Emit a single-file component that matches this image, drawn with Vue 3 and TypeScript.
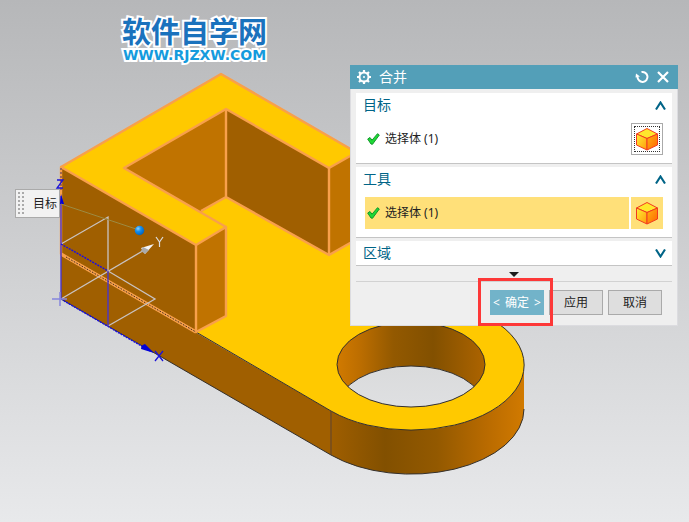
<script setup lang="ts">
import { ref } from 'vue'

interface Section {
  id: string
  title: string
  open: boolean
  active: boolean
}

const sections = ref<Section[]>([
  { id: 'target', title: '目标', open: true, active: false },
  { id: 'tool', title: '工具', open: true, active: true },
  { id: 'region', title: '区域', open: false, active: false },
])

const toggle = (section: Section): void => {
  section.open = !section.open
}
</script>

<template>
  <main class="viewport">
    <svg class="scene" viewBox="0 0 689 522" preserveAspectRatio="xMinYMin meet" aria-hidden="true">
      <defs>
        <linearGradient id="outerWall" gradientUnits="userSpaceOnUse" x1="331" y1="0" x2="524" y2="0">
          <stop offset="0" stop-color="#9f5e00" />
          <stop offset="0.28" stop-color="#825000" />
          <stop offset="0.55" stop-color="#935900" />
          <stop offset="0.8" stop-color="#b86a00" />
          <stop offset="1" stop-color="#d17a00" />
        </linearGradient>
        <linearGradient id="holeWall" gradientUnits="userSpaceOnUse" x1="337" y1="0" x2="485" y2="0">
          <stop offset="0" stop-color="#d17a00" />
          <stop offset="0.15" stop-color="#bd6e00" />
          <stop offset="0.38" stop-color="#935900" />
          <stop offset="0.65" stop-color="#825000" />
          <stop offset="1" stop-color="#ad6400" />
        </linearGradient>
        <linearGradient id="floorTone" gradientUnits="userSpaceOnUse" x1="0" y1="360" x2="0" y2="410">
          <stop offset="0" stop-color="#d9dadb" />
          <stop offset="1" stop-color="#dfe0e2" />
        </linearGradient>
        <radialGradient id="ball" cx="0.35" cy="0.3" r="0.75">
          <stop offset="0" stop-color="#8fd4ff" />
          <stop offset="0.4" stop-color="#1690f0" />
          <stop offset="1" stop-color="#0060b8" />
        </radialGradient>
        <clipPath id="holeClip"><ellipse cx="411" cy="364.5" rx="74" ry="42.5" /></clipPath>
      </defs>

      <!-- base plate -->
      <path d="M61 254 331 411V455L61 299Z" fill="#a05f00" />
      <path d="M331 411A113 65 0 0 0 524 365V409A113 65 0 0 1 331 455Z" fill="url(#outerWall)" />
      <path d="M196 332 331 411A113 65 0 1 0 491 319L340 232 226 190 190 215Z" fill="#ffc900" />
      <g fill="none" stroke="#34302c" stroke-width="1">
        <path d="M196 332 331 411A113 65 0 1 0 491 319L350 238" />
        <path d="M61 299 331 455A113 65 0 0 0 524 409" />
        <path d="M331 411V455" stroke="#5c4330" />
      </g>
      <ellipse cx="411" cy="364.5" rx="74" ry="42.5" fill="url(#holeWall)" />
      <g clip-path="url(#holeClip)">
        <ellipse cx="411" cy="408.5" rx="74" ry="42.5" fill="url(#floorTone)" stroke="#34302c" />
      </g>
      <ellipse cx="411" cy="364.5" rx="74" ry="42.5" fill="none" stroke="#34302c" />

      <!-- open block on top of the plate -->
      <path d="M124 168 226 109V197L201 212Z" fill="#c07300" />
      <path d="M226 109 329 168V255L226 197Z" fill="#a05f00" />
      <path d="M329 168 380 139V226L329 255Z" fill="#c07300" />
      <path d="M61 167 221 74 380 166V139L329 168 226 109 124 168 226 227 196 245Z" fill="#ffc900" />
      <path d="M61 167 196 245V332L61 254Z" fill="#a05f00" />
      <path d="M196 245 226 227V316L196 332Z" fill="#c07300" />
      <g fill="none" stroke="#f8a04b" stroke-width="2.4" stroke-linejoin="round">
        <path d="M61 167 221 74 380 166" />
        <path d="M61 167 196 245V332L61 254Z" />
        <path d="M196 245 226 227V316L196 332" />
        <path d="M226 227 124 168 226 109 329 168 380 139" />
        <path d="M226 109V197L329 255 380 226M329 168V255M226 197 201 211" />
      </g>
      <path d="M61 254 196 332" stroke="#f8a04b" stroke-width="3.2" />
      <path d="M66 257 196 332" stroke="#31241a" stroke-width="0.9" stroke-dasharray="1.6 1.4" />

      <!-- datum coordinate system -->
      <g fill="none" stroke="#c9c3c2" stroke-width="1.3">
        <path d="M61 244 108 217V271L155 299 108 326" />
        <path d="M61 299 146 249" />
      </g>
      <g fill="none" stroke="#4a35c8" stroke-width="1.4">
        <path d="M61 196V299M108 271V326" />
        <path d="M61 244 108 271M61 299 150 351" stroke="#170cea" stroke-dasharray="2 1" />
      </g>
      <path d="M61 168V190" stroke="#4b3160" stroke-dasharray="2 2" />
      <path d="M52 299H67M60 292V306" stroke="#8585dd" stroke-width="1.5" />
      <path d="M154 244 145 254 141 248Z" fill="#f5f5f5" />
      <path d="M145 254 141 251 143 247 149 250Z" fill="#aaa" />
      <path d="M154 353 145 344Q141 345 141 349Z" fill="#0000d8" />
      <path d="M61 194 64 204H60Z" fill="#0000d8" />
      <path d="M156 237 159.500 242 163 237M159.500 242V247" fill="none" stroke="#ddd" stroke-width="1.2" />
      <path d="M155 351 163 361M163 351 155 361" fill="none" stroke="#1a12d8" stroke-width="1.3" />
      <path d="M57 180H63L57 188H63" fill="none" stroke="#1a12d8" stroke-width="1.3" />
      <path d="M61 204 136 229" stroke="#9c8a42" />
      <circle cx="139.500" cy="230.500" r="4.700" fill="url(#ball)" />
    </svg>

    <header class="brand">
      <span class="brand-name">软件自学网</span>
      <span class="brand-url">WWW.RJZXW.COM</span>
    </header>

    <div class="tag">
      <svg class="grip" width="7" height="23" viewBox="0 0 7 23" aria-hidden="true">
        <path d="M1 0V23M5 0V23" stroke="#aaa" stroke-width="2" stroke-dasharray="2 2" />
      </svg>
      <span>目标</span>
    </div>

    <section class="dialog" role="dialog" aria-labelledby="dialog-title">
      <header class="titlebar">
        <svg width="14" height="14" viewBox="0 0 14 14" aria-hidden="true">
          <g fill="none" stroke="#fff">
            <circle cx="7" cy="7" r="4.500" stroke-width="2" />
            <path d="M7 0V2M7 12V14M0 7H2M12 7H14M2 2 3.500 3.500M10.500 10.500 12 12M12 2 10.500 3.500M3.500 10.500 2 12" stroke-width="2.200" />
          </g>
          <circle cx="7" cy="7" r="1" fill="#fff" />
        </svg>
        <h1 id="dialog-title">合并</h1>
        <button class="icon-button" type="button" aria-label="重置">
          <svg width="14" height="14" viewBox="0 0 14 14" aria-hidden="true">
            <path d="M6.500 2A5 5 0 1 1 2.500 7" fill="none" stroke="#fff" stroke-width="2" />
            <path d="M.5 7.500 1 3.500 5 6.500Z" fill="#fff" />
          </svg>
        </button>
        <button class="icon-button" type="button" aria-label="关闭">
          <svg width="12" height="12" viewBox="0 0 12 12" aria-hidden="true">
            <path d="M1 1 11 11M11 1 1 11" stroke="#fff" stroke-width="2.200" />
          </svg>
        </button>
      </header>

      <div class="content">
        <section v-for="section in sections" :key="section.id" class="group">
          <button class="group-head" type="button" :aria-expanded="section.open" @click="toggle(section)">
            <span>{{ section.title }}</span>
            <svg width="11" height="9" viewBox="0 0 11 9" aria-hidden="true">
              <path :d="section.open ? 'M1 8.500 5.500 1.500 10 8.500' : 'M1 .5 5.500 7.500 10 .5'" fill="none" stroke="#006487" stroke-width="2.1" />
            </svg>
          </button>
          <div v-if="section.open" class="selection" :class="{ active: section.active }">
            <div class="selection-label">
              <svg width="13" height="12" viewBox="0 0 13 12" aria-hidden="true">
                <path d="M.7 6 3 4.500 5 7.200 10.500.7 12.300 2 5.500 11.300 4 11Z" fill="#1dda35" stroke="#12962a" />
              </svg>
              <span>选择体 (1)</span>
            </div>
            <button class="body-button" type="button" aria-label="选择体">
              <svg width="22" height="23" viewBox="0 0 22 23" aria-hidden="true">
                <defs>
                  <linearGradient :id="`left-${section.id}`" x1="0" y1="0" x2="1" y2="1">
                    <stop offset="0" stop-color="#ffee35" /><stop offset="1" stop-color="#ff9a0c" />
                  </linearGradient>
                  <linearGradient :id="`right-${section.id}`" x1="0" y1="0" x2="1" y2="1">
                    <stop offset="0" stop-color="#ffb414" /><stop offset="1" stop-color="#ff6500" />
                  </linearGradient>
                </defs>
                <g stroke="#f23a20" stroke-linejoin="round">
                  <path d="M.5 6 11 .5 21.500 6 11 10.500Z" fill="#ffe72d" />
                  <path d="M.5 6 11 10.500V22L.5 17Z" :fill="`url(#left-${section.id})`" />
                  <path d="M11 10.500 21.500 6V17L11 22Z" :fill="`url(#right-${section.id})`" />
                </g>
              </svg>
            </button>
          </div>
        </section>

        <svg class="more" width="10" height="5" viewBox="0 0 10 5" aria-hidden="true"><path d="M0 0H10L5 5Z" fill="#1c1c1c" /></svg>
        <footer class="actions">
          <div class="confirm">
            <button class="primary" type="button"><span>&lt;</span><span>确定</span><span>&gt;</span></button>
          </div>
          <button type="button">应用</button>
          <button type="button">取消</button>
        </footer>
      </div>
    </section>
  </main>
</template>

<style>
body {
  margin: 0;
}
</style>

<style scoped>
.viewport {
  position: relative;
  min-height: 100vh;
  box-sizing: border-box;
  padding: 18px 122px;
  overflow: hidden;
  background: linear-gradient(#b6b7b9, #e8e9eb);
  color: #222;
  font: 12px/16px "Noto Sans", "Noto Sans CJK SC", sans-serif;
}

.viewport *,
.viewport *::before {
  box-sizing: border-box;
}

.viewport svg {
  display: block;
  flex-shrink: 0;
}

.scene {
  position: absolute;
  top: 0;
  left: 0;
  width: 100%;
  height: auto;
}

.brand {
  position: relative;
  display: inline-flex;
  flex-direction: column;
  align-items: center;
  font-weight: bold;
  white-space: nowrap;
  paint-order: stroke fill;
  -webkit-text-stroke: 4px #fff;
}

.brand-name {
  color: #1a72bd;
  font-family: "Liberation Sans", "Noto Sans CJK SC", sans-serif;
  font-size: 29px;
  line-height: 31px;
}

.brand-url {
  color: #159bdd;
  font-family: "DejaVu Sans", sans-serif;
  font-size: 14px;
  line-height: 12px;
}

.tag {
  position: absolute;
  top: 189px;
  left: 15px;
  display: flex;
  align-items: center;
  gap: 8px;
  height: 29px;
  padding: 0 2px;
  border: 1px solid #aaa;
  background: #f2f2f2;
  white-space: nowrap;
}

.dialog {
  position: absolute;
  top: 65px;
  left: 350px;
  width: 328px;
  border: 1px solid #dcdce0;
  border-top: 0;
  background: #efefef;
}

.titlebar {
  display: flex;
  align-items: center;
  gap: 8px;
  height: 24px;
  margin: 0 -1px;
  padding: 0 9px 0 7px;
  background: #539fb8;
  color: #fff;
}

h1 {
  flex: 1;
  margin: 0;
  font-size: 14px;
  font-weight: 400;
  line-height: 24px;
}

button {
  margin: 0;
  padding: 0;
  border: 0;
  background: none;
  color: inherit;
  font: inherit;
}

.content {
  display: flex;
  flex-direction: column;
  padding: 4px 5px 10px;
}

.group {
  margin-bottom: 3px;
  border-bottom: 1px solid #c4c4c4;
  background: #fff;
}

.group-head {
  display: flex;
  align-items: center;
  justify-content: space-between;
  width: 100%;
  height: 24px;
  padding: 0 6px 0 7px;
  color: #006487;
  font-size: 14px;
}

.selection {
  display: flex;
  gap: 2px;
  padding: 6px 9px 8px;
}

.selection-label {
  display: flex;
  flex: 1;
  align-items: center;
  gap: 5px;
  height: 32px;
  padding-left: 2px;
}

.body-button {
  display: grid;
  place-items: center;
  position: relative;
  width: 32px;
  height: 32px;
  border: 1px solid #aaa;
}

.body-button::before {
  content: "";
  position: absolute;
  inset: 2px;
  border: 1px dotted #333;
}

.active .selection-label,
.active .body-button {
  background: #ffe079;
}

.active .body-button {
  border: 0;
}

.active .body-button::before {
  display: none;
}

.more {
  align-self: center;
  margin: 3px 0 4px;
}

.actions {
  display: flex;
  justify-content: flex-end;
  gap: 5px;
  padding: 8px 10px 0 0;
  border-top: 1px solid #d2d2d2;
}

.actions button {
  width: 54px;
  height: 25px;
  border: 1px solid #aaa;
  background: #dedede;
}

.confirm {
  position: relative;
}

.confirm::before {
  content: "";
  position: absolute;
  inset: -12px -9px -11px -12px;
  border: 3px solid #fd3838;
}

.actions .primary {
  display: flex;
  align-items: center;
  justify-content: center;
  gap: 5px;
  border: 0;
  background: #72b3c9;
  color: #fff;
}
</style>
